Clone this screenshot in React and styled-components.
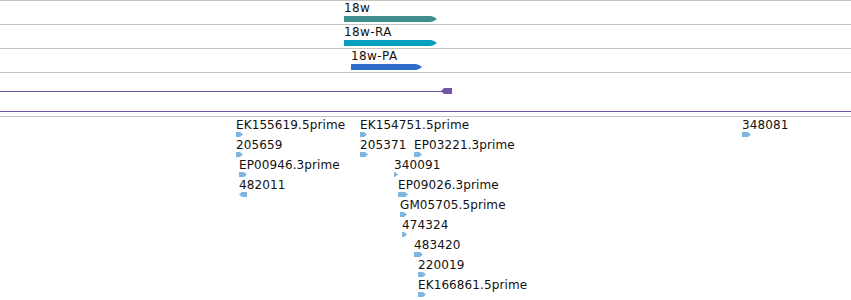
import React from "react";
import styled, { createGlobalStyle } from "styled-components";

const GlobalStyle = createGlobalStyle`
  body {
    margin: 0;
    background: #ffffff;
    font-family: "DejaVu Sans", "Liberation Sans", sans-serif;
  }
`;

const transcripts = [
  { name: "18w", x: 344, width: 93, color: "#3f8f8f" },
  { name: "18w-RA", x: 344, width: 93, color: "#05a0c0" },
  { name: "18w-PA", x: 351, width: 71, color: "#2e6dcb" },
];

// row, x, arrow width, strand
const features = [
  { name: "EK155619.5prime", row: 0, x: 236, w: 7 },
  { name: "205659", row: 1, x: 236, w: 7 },
  { name: "EP00946.3prime", row: 2, x: 239, w: 8 },
  { name: "482011", row: 3, x: 239, w: 8, reverse: true },
  { name: "EK154751.5prime", row: 0, x: 360, w: 7 },
  { name: "205371", row: 1, x: 360, w: 8 },
  { name: "EP03221.3prime", row: 1, x: 414, w: 8 },
  { name: "340091", row: 2, x: 394, w: 4 },
  { name: "EP09026.3prime", row: 3, x: 398, w: 10 },
  { name: "GM05705.5prime", row: 4, x: 400, w: 7 },
  { name: "474324", row: 5, x: 402, w: 5 },
  { name: "483420", row: 6, x: 414, w: 9 },
  { name: "220019", row: 7, x: 418, w: 8 },
  { name: "EK166861.5prime", row: 8, x: 418, w: 8 },
  { name: "348081", row: 0, x: 742, w: 9 },
];

export default function App() {
  return (
    <>
      <GlobalStyle />
      <Browser>
        {transcripts.map((t) => (
          <Track key={t.name}>
            <Gene style={{ marginLeft: t.x }}>
              <GeneLabel>{t.name}</GeneLabel>
              <GeneBar width={t.width} color={t.color} />
            </Gene>
          </Track>
        ))}
        <GeneModel>
          <svg width="851" height="38">
            <line x1="0" y1="18.5" x2="443" y2="18.5" stroke="#7155a7" strokeWidth="1" />
            <polygon points="441,18 444,15 452,15 452,21 444,21" fill="#7155a7" />
          </svg>
        </GeneModel>
        <Divider />
        <FeatureCanvas>
          {features.map((f) => (
            <Feature key={f.name} style={{ left: f.x, top: 2 + f.row * 20 }}>
              <FeatureLabel>{f.name}</FeatureLabel>
              <Arrow width={f.w} reverse={f.reverse} />
            </Feature>
          ))}
        </FeatureCanvas>
      </Browser>
    </>
  );
}

function GeneBar({ width, color }) {
  const w = width;
  return (
    <BarSvg width={w} height="6">
      <polygon
        points={`0,0 ${w - 6},0 ${w - 3},1 ${w},3 ${w - 3},5 ${w - 6},6 0,6`}
        fill={color}
      />
    </BarSvg>
  );
}

function Arrow({ width, reverse }) {
  const w = width;
  const pts = reverse
    ? `0,2.5 3,0 ${w},0 ${w},5 3,5`
    : `0,0 ${w - 3},0 ${w},2.5 ${w - 3},5 0,5`;
  return (
    <ArrowSvg width={w} height="5">
      <polygon points={pts} fill="#7fb6e0" />
    </ArrowSvg>
  );
}

const Browser = styled.div`
  width: 851px;
  height: 300px;
  overflow: hidden;
  border-top: 1px solid #c4c4c4;
  box-sizing: border-box;
`;

const Track = styled.div`
  height: 23px;
  border-bottom: 1px solid #c4c4c4;
  display: flex;
`;

const Gene = styled.div`
  display: flex;
  flex-direction: column;
  align-items: flex-start;
`;

const GeneLabel = styled.div`
  font-size: 12px;
  line-height: 14px;
  letter-spacing: 0.4px;
  color: #111;
  white-space: nowrap;
`;

const BarSvg = styled.svg`
  display: block;
  margin-top: 1px;
`;

const GeneModel = styled.div`
  height: 38px;
  border-bottom: 1px solid #7155a7;

  svg {
    display: block;
  }
`;

const Divider = styled.div`
  height: 4px;
  border-bottom: 1px solid #c4c4c4;
`;

const FeatureCanvas = styled.div`
  position: relative;
  height: 183px;
`;

const Feature = styled.div`
  position: absolute;
  display: flex;
  flex-direction: column;
  align-items: flex-start;
`;

const FeatureLabel = styled.div`
  font-size: 12px;
  line-height: 13px;
  letter-spacing: 0.1px;
  color: #111;
  white-space: nowrap;
`;

const ArrowSvg = styled.svg`
  display: block;
`;
